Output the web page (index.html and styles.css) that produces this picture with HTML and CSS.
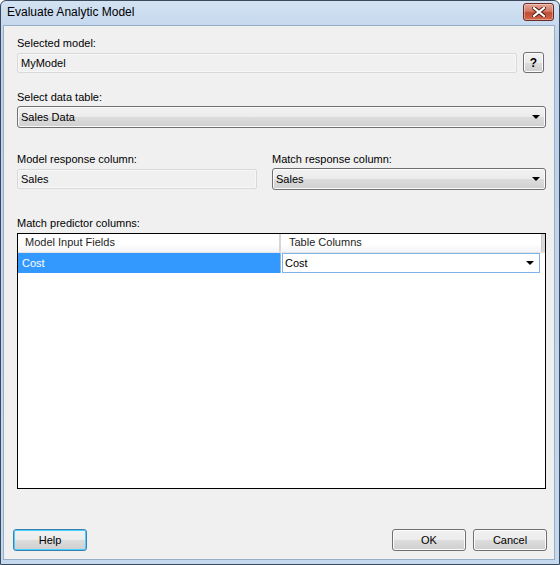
FILE: index.html
```html
<!DOCTYPE html>
<html>
<head>
<meta charset="utf-8">
<link rel="stylesheet" href="styles.css">
</head>
<body>
<div class="window">
  <div class="titlebar">
    <span class="title">Evaluate Analytic Model</span>
    <div class="close-btn">
      <svg width="14" height="10" viewBox="0 0 14 10"><path d="M2 1 L12 9 M12 1 L2 9" stroke="#4a1a12" stroke-width="4" stroke-linecap="square"/><path d="M2 1 L12 9 M12 1 L2 9" stroke="#ffffff" stroke-width="2.2" stroke-linecap="square"/></svg>
    </div>
  </div>
  <div class="client">
    <div class="label first">Selected model:</div>
    <div class="row-model">
      <div class="textbox wide">MyModel</div>
      <div class="btn help-q">?</div>
    </div>

    <div class="label sec2">Select data table:</div>
    <div class="combo full"><span>Sales Data</span><span class="arrow"></span></div>

    <div class="two-col">
      <div class="col left">
        <div class="label">Model response column:</div>
        <div class="textbox resp">Sales</div>
      </div>
      <div class="col right">
        <div class="label">Match response column:</div>
        <div class="combo resp-combo"><span>Sales</span><span class="arrow"></span></div>
      </div>
    </div>

    <div class="label sec4">Match predictor columns:</div>
    <div class="grid">
      <div class="grid-head">
        <div class="hcell c1">Model Input Fields</div>
        <div class="hcell c2">Table Columns</div>
        <div class="hfill"></div>
      </div>
      <div class="grid-row">
        <div class="cell c1 selected">Cost</div>
        <div class="cell c2"><div class="cell-combo"><span>Cost</span><span class="arrow"></span></div></div>
      </div>
    </div>

    <div class="buttons">
      <div class="btn dlg focused">Help</div>
      <div class="spacer"></div>
      <div class="btn dlg">OK</div>
      <div class="btn dlg">Cancel</div>
    </div>
  </div>
</div>
</body>
</html>
```

FILE: styles.css
```css
html, body {
  margin: 0;
  padding: 0;
  background: #ffffff;
}
body {
  font-family: "Liberation Sans", Arial, sans-serif;
  font-size: 11px;
  color: #000;
}
.window {
  width: 560px;
  height: 565px;
  box-sizing: border-box;
  border: 1px solid #3a4a5c;
  border-radius: 6px 6px 0 0;
  background: linear-gradient(#d3e2f3, #bcd2ea 40px, #c4d8ee);
  display: flex;
  flex-direction: column;
  overflow: hidden;
}
.titlebar {
  height: 24px;
  display: flex;
  align-items: center;
  padding-left: 6px;
  padding-right: 5px;
  flex: none;
}
.title {
  font-size: 12px;
  color: #000;
  flex: 1;
  position: relative;
  top: -1px;
}
.close-btn {
  width: 29px;
  height: 16px;
  border: 1px solid #6b2a22;
  border-radius: 3px;
  background: linear-gradient(#e3a898, #d47a67 45%, #c24a34 55%, #cf6a4f);
  box-shadow: inset 0 0 0 1px rgba(255,255,255,0.35);
  display: flex;
  align-items: center;
  justify-content: center;
  position: relative;
  top: -1px;
}
.client {
  flex: 1;
  margin: 0 4px 4px 2px;
  background: #f0f0f0;
  border: 1px solid #97aec7;
  padding: 10px 9px 0 13px;
  display: flex;
  flex-direction: column;
}
.label {
  height: 13px;
  line-height: 15px;
  white-space: nowrap;
}
.row-model {
  display: flex;
  margin-top: 3px;
  gap: 6px;
  align-items: center;
}
.textbox {
  box-sizing: border-box;
  height: 20px;
  line-height: 18px;
  border: 1px solid #d9d9d9;
  border-radius: 2px;
  background: #f0f0f0;
  box-shadow: inset 0 0 0 1px #f7f7f7;
  padding-left: 3px;
}
.textbox.wide {
  width: 500px;
}
.btn {
  box-sizing: border-box;
  border: 1px solid #707070;
  border-radius: 3px;
  background: linear-gradient(#f2f2f2, #ebebeb 50%, #dddddd 50%, #cfcfcf);
  box-shadow: inset 0 0 0 1px #fcfcfc;
  display: flex;
  align-items: center;
  justify-content: center;
}
.help-q {
  width: 21px;
  height: 21px;
  font-weight: bold;
  font-size: 12px;
}
.sec2 {
  margin-top: 17px;
}
.combo {
  box-sizing: border-box;
  height: 22px;
  margin-top: 3px;
  border: 1px solid #707070;
  border-radius: 3px;
  background: linear-gradient(#f2f2f2, #ebebeb 50%, #dddddd 50%, #cfcfcf);
  box-shadow: inset 0 0 0 1px #fbfbfb;
  display: flex;
  align-items: center;
  padding-left: 3px;
  padding-right: 5px;
}
.combo span:first-child,
.cell-combo span:first-child {
  flex: 1;
}
.arrow {
  width: 0;
  height: 0;
  border-left: 4px solid transparent;
  border-right: 4px solid transparent;
  border-top: 4px solid #000;
}
.combo.full {
  width: 529px;
}
.two-col {
  display: flex;
  margin-top: 24px;
  gap: 15px;
}
.col {
  display: flex;
  flex-direction: column;
}
.col.left {
  width: 240px;
}
.col.right {
  width: 274px;
}
.textbox.resp {
  margin-top: 4px;
  width: 240px;
}
.resp-combo {
  width: 274px;
}
.sec4 {
  margin-top: 26px;
}
.grid {
  box-sizing: border-box;
  width: 529px;
  height: 256px;
  margin-top: 4px;
  border: 1px solid #000;
  background: #fff;
  display: flex;
  flex-direction: column;
}
.grid-head {
  height: 18px;
  display: flex;
  background: linear-gradient(#ffffff, #ffffff 55%, #f3f4f6);
  border-bottom: 1px solid #e3e5e8;
}
.hcell {
  box-sizing: border-box;
  height: 18px;
  line-height: 17px;
  padding-left: 7px;
  color: #1e1e1e;
}
.hcell.c1 {
  width: 263px;
  border-right: 2px solid #d5d5d5;
}
.hcell.c2 {
  width: 260px;
  padding-left: 8px;
}
.hfill {
  flex: 1;
  background: #d9d9d9;
  border-left: 1px solid #c8c8c8;
}
.grid-row {
  display: flex;
  height: 20px;
}
.cell {
  box-sizing: border-box;
  height: 20px;
}
.cell.c1 {
  width: 263px;
  background: #3399ff;
  color: #fff;
  line-height: 20px;
  padding-left: 4px;
  border-right: 1px solid #8fb8e0;
}
.cell.c2 {
  width: 260px;
  padding: 0 1px 0 1px;
}
.cell-combo {
  box-sizing: border-box;
  height: 20px;
  border: 1px solid #7eb4ea;
  background: #fff;
  display: flex;
  align-items: center;
  padding-left: 2px;
  padding-right: 5px;
}
.buttons {
  display: flex;
  margin-top: 40px;
  margin-left: -4px;
  margin-right: -2px;
  gap: 7px;
}
.spacer {
  flex: 1;
}
.btn.dlg {
  width: 74px;
  height: 22px;
  font-size: 11px;
}
.btn.focused {
  border-color: #3c7fb1;
  box-shadow: inset 0 0 0 1px #48d1ff;
}
```
